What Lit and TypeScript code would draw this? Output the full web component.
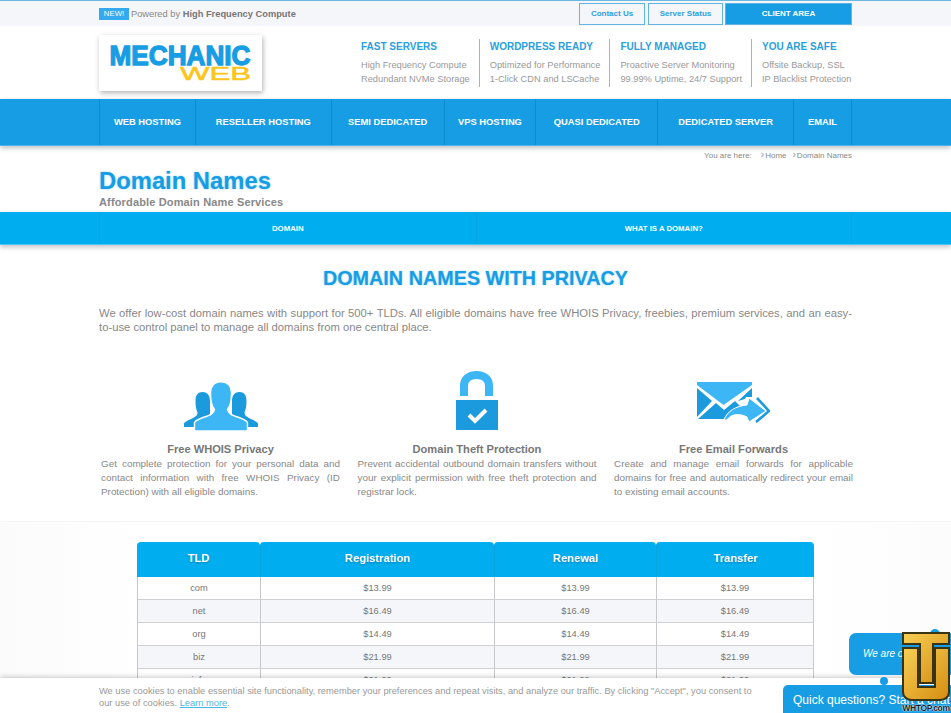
import { LitElement, html, css, svg } from "lit";
import { customElement } from "lit/decorators.js";

const NAV = [
  ["WEB HOSTING", 96], ["RESELLER HOSTING", 136], ["SEMI DEDICATED", 113], ["VPS HOSTING", 92],
  ["QUASI DEDICATED", 122], ["DEDICATED SERVER", 136], ["EMAIL", 58],
] as const;
const FEATURES = [
  ["FAST SERVERS", "High Frequency Compute", "Redundant NVMe Storage"],
  ["WORDPRESS READY", "Optimized for Performance", "1-Click CDN and LSCache"],
  ["FULLY MANAGED", "Proactive Server Monitoring", "99.99% Uptime, 24/7 Support"],
  ["YOU ARE SAFE", "Offsite Backup, SSL", "IP Blacklist Protection"],
];
const ROWS = [["com", "$13.99", "$13.99", "$13.99"], ["net", "$16.49", "$16.49", "$16.49"], ["org", "$14.49", "$14.49", "$14.49"], ["biz", "$21.99", "$21.99", "$21.99"], ["info", "$21.99", "$21.99", "$21.99"]];

const people = svg`<svg class="i1" width="74" height="50" viewBox="0 0 74 50">
  <g fill="#1b9bdd">
    <path d="M0 46 V42.5 C1 40.5 5 39 9 37 C12 35.5 13.5 34 13.5 31.5 C12.5 29 11.5 26 11.5 20 C11.5 14 14 11 18.5 11 C23 11 26 14 26 20 V38 L12 46 Z"/>
    <path d="M74 46 V42.5 C73 40.5 69 39 65 37 C62 35.5 60.500 34 60.500 31.500 C61.500 29 62.500 26 62.500 20 C62.500 14 60 11 55.500 11 C51 11 48 14 48 20 V38 L62 46 Z"/>
  </g>
  <path fill="#3db6f6" stroke="#fff" stroke-width="1.4" d="M10.500 50 V41.500 C11.500 39.500 15 38 19 36.500 C25 34.500 30 33 30.500 28.500 C27.500 25 26.500 18 26.500 12 C26.500 5 30.500 .7 37 .7 C43.500 .7 47.500 5 47.500 12 C47.500 18 46.500 25 43.500 28.500 C44 33 49 34.500 55 36.500 C59 38 62.500 39.500 63.500 41.500 V50 Z"/>
</svg>`;
const lock = svg`<svg class="i2" width="44" height="60" viewBox="0 0 44 60">
  <path fill="none" stroke="#3db6f6" stroke-width="8" d="M9 25 V15 C9 8 14 4 21.500 4 C29 4 34 8 34 15 V25"/>
  <rect x="1" y="29" width="42" height="30" fill="#1b9bdd"/>
  <path fill="none" stroke="#fff" stroke-width="4" d="M14 44 L20 50 L31 39"/>
</svg>`;
const mail = svg`<svg class="i3" width="74" height="44" viewBox="0 0 74 44">
  <path fill="#3db6f6" d="M1 1 H56 V4 L27.500 24 L1 4 Z"/>
  <path fill="#1b9bdd" d="M1 7 L16 20 L1 36 Z"/>
  <path fill="#1b9bdd" d="M56 7 V16 L50 16 L49 18 L42 20 Z"/>
  <path fill="#1b9bdd" d="M2 38 L20 22 L28 29 L39 20 L44 25 C38 27 32 31 28 38 Z"/>
  <path fill="#3db6f6" stroke="#fff" stroke-width="1" d="M28 39 C31 30 40 25 51 24 L53 17 L70 30 L53 41 L51 36 C43 32 35 33 31 39 Z"/>
  <path fill="none" stroke="#1b9bdd" stroke-width="2.600" d="M61 17 L73 30 L60 41"/>
</svg>`;
const whtop = svg`<svg width="50" height="71" viewBox="0 0 50 71">
  <defs><linearGradient id="g" x1="0" y1="0" x2="1" y2="1"><stop offset="0" stop-color="#f8cf55"/><stop offset="1" stop-color="#d48d10"/></linearGradient></defs>
  <path fill="url(#g)" stroke="#3a3414" stroke-width="2" d="M2 17 H17 V56 H34 V17 H48 V61 C48 66 44 69 39 69 H11 C6 69 2 66 2 61 Z"/>
  <path fill="url(#g)" stroke="#3a3414" stroke-width="2" d="M2 2 H48 V13 H32 V52 H19 V13 H2 Z"/>
</svg>`;

@customElement("app-root")
export class AppRoot extends LitElement {
  static styles = css`
    :host { display: block; height: 713px; overflow: hidden; position: relative; background: #fff;
      font-family: "Liberation Sans", Arial, sans-serif; color: #777; }
    * { box-sizing: border-box; }
    .wrap { width: 753px; margin: 0 auto; }
    .top { height: 26px; background: #f5f6fa; border-top: 1px solid #6bb8e0; }
    .top .wrap { display: flex; align-items: center; height: 25px; }
    .new { background: #35a9ee; color: #fff; font-size: 7.800px; width: 30px; height: 12px; line-height: 12px; text-align: center; margin-right: 2px; }
    .powered { font-size: 9.300px; color: #888; flex: 1; }
    .powered b { color: #777; }
    .tbtn { height: 22px; border: 1px solid #62b4e2; color: #2d9fe0; font-size: 8px; font-weight: 700; display: flex; align-items: center; justify-content: center; margin-left: 3px; }
    .tbtn.c { width: 66px; margin: 0; }
    .tbtn.s { width: 75px; }
    .tbtn.a { width: 127px; margin-left: 2px; background: #179de4; color: #fff; }
    .head .wrap { display: flex; height: 73px; }
    .logo { flex: none; width: 163px; height: 56px; margin-top: 9px; box-shadow: 1px 2px 5px rgba(0,0,0,.3); background: #fff; display: block; }
    .feats { flex: none; margin-left: 99px; display: flex; padding-top: 13px; }
    .feat { padding-right: 9px; height: 48px; border-right: 1px solid #7cc0e6; margin-right: 10px; white-space: nowrap; }
    .feat:last-child { border: 0; margin: 0; padding: 0; }
    .feat h4 { margin: 0 0 4px; font-size: 10px; line-height: 15px; color: #2a9fe0; font-weight: 700; }
    .feat div { font-size: 9.280px; line-height: 14px; color: #999; }
    .nav { background: #179de4; height: 47px; box-shadow: 0 2px 5px rgba(0,0,0,.25); position: relative; border-bottom: 1px solid #4fb4ec; }
    .nav .wrap { display: flex; height: 46px; border-left: 1px solid #0f8bce; }
    .nav a { color: #fff; font-size: 9.360px; font-weight: 700; display: flex; align-items: center; justify-content: center; border-right: 1px solid #0f8bce; }
    .crumb { height: 18px; font-size: 8px; color: #888; display: flex; justify-content: flex-end; align-items: center; gap: 6px; }
    .crumb span::before { content: "›"; color: #999; margin-right: 1px; font-size: 10px; line-height: 8px; }
    .crumb em { font-style: normal; margin-right: 3px; }
    h1 { margin: 1px 0 1px; font-size: 23.800px; line-height: 31px; color: #179de4; text-shadow: 0 0 2px rgba(23,157,228,.5); }
    .sub { font-size: 11px; font-weight: 700; color: #888; line-height: 11px; letter-spacing: .15px; height: 15px; }
    .tabs { background: #00aeef; height: 33px; box-shadow: 0 2px 5px rgba(0,0,0,.25); border-bottom: 1px solid #4fc3f2; position: relative; }
    .tabs .wrap { display: grid; grid-template-columns: 1fr 1fr; height: 32px; border-left: 1px solid #0aa3e0; border-right: 1px solid #0aa3e0; }
    .tabs a { color: #fff; font-size: 7.800px; font-weight: 700; display: flex; align-items: center; justify-content: center; }
    .tabs a + a { border-left: 1px solid #0aa3e0; }
    h2 { margin: 0; padding-top: 21px; height: 56px; text-align: center; font-size: 19.800px; line-height: 24px; color: #179de4; text-shadow: 0 0 2px rgba(23,157,228,.5); }
    .lead { margin: 0; font-size: 11.250px; line-height: 14px; color: #888; text-align: justify; height: 61px; padding-top: 5px; }
    .cols { display: grid; grid-template-columns: repeat(3, 239px); justify-content: space-between; padding: 0 0 0 2px; margin-right: -1px; }
    .col { text-align: center; }
    .ico { height: 80px; display: flex; justify-content: center; align-items: flex-start; }
    .ico svg { display: block; }
    .i1 { margin-top: 19px; }
    .i2 { margin-top: 9px; }
    .i3 { margin-top: 19px; margin-left: -2px; }
    .col h3 { margin: 0; font-size: 11.100px; line-height: 14px; color: #777; height: 15px; }
    .col p { margin: 0; font-size: 9.900px; line-height: 14px; color: #888; text-align: justify; }
    .band { margin-top: 22px; border-top: 1px solid #f5f5f5; height: 300px; padding-top: 20px; background: linear-gradient(90deg, #fbfbfb, #fff 15%, #fff 85%, #fcfcfc); }
    table { width: 677px; margin: 0 auto; border-collapse: separate; border-spacing: 0; table-layout: fixed; }
    th { height: 35px; padding: 0 0 3px; background: #00aeef; color: #fff; font-size: 11.200px; text-shadow: 0 1px 2px rgba(0,0,0,.25); border-left: 1px solid #0aa3e0; border-top-right-radius: 4px; border-top-left-radius: 4px; }
    th:first-child { border-left: 0; }
    td { height: 23px; text-align: center; font-size: 9.300px; color: #777; border-left: 1px solid #c8c8cc; border-bottom: 1px solid #cfcfd4; }
    td:last-child { border-right: 1px solid #c8c8cc; }
    tr:nth-child(even) td { background: #f5f6fa; }
    .cookie { position: absolute; left: 0; right: 0; bottom: 0; height: 35px; background: #fff; box-shadow: 0 -1px 5px rgba(0,0,0,.22); font-size: 9.300px; line-height: 12px; color: #999; padding-top: 7px; }
    .cookie p { margin: 0; width: 660px; }
    .cookie a { color: #4db5e8; text-decoration: underline; }
    .bubble { position: absolute; left: 849px; top: 633px; width: 120px; height: 42px; background: #179de4; border-radius: 7px; color: #fff; font-size: 10px; font-style: italic; padding: 15px 0 0 14px; white-space: nowrap; }
    .dot { position: absolute; left: 880px; top: 677px; width: 8px; height: 8px; border-radius: 50%; background: #179de4; }
    .dot2 { position: absolute; left: 930px; top: 629px; width: 10px; height: 10px; border-radius: 50%; background: #179de4; }
    .chat { position: absolute; left: 783px; top: 685px; width: 180px; height: 30px; background: #179de4; border-radius: 5px 5px 0 0; color: #fff; font-size: 12px; padding: 8px 0 0 10px; white-space: nowrap; }
    .badge { position: absolute; left: 901px; top: 631px; width: 50px; height: 82px; }
    .badge svg { display: block; }
    .badge span { display: block; margin-top: 1px; font-size: 8.500px; line-height: 10px; font-weight: 700; color: #1c1c1c; text-align: center; letter-spacing: -.3px; text-shadow: 0 0 2px #fff, 0 0 1px #fff; white-space: nowrap; }
  `;

  render() {
    return html`
      <div class="top"><div class="wrap">
        <span class="new">NEW!</span>
        <span class="powered">Powered by <b>High Frequency Compute</b></span>
        <span class="tbtn c">Contact Us</span><span class="tbtn s">Server Status</span><span class="tbtn a">CLIENT AREA</span>
      </div></div>
      <div class="head"><div class="wrap">
        <svg class="logo" viewBox="0 0 163 56">
          <text x="10.500" y="29.500" font-family="Liberation Sans" font-weight="700" font-size="27" fill="#179de4" stroke="#179de4" stroke-width="1.300" textLength="141" lengthAdjust="spacingAndGlyphs">MECHANIC</text>
          <text x="81" y="45" font-family="Liberation Sans" font-size="19" fill="#fbc51a" stroke="#fbc51a" stroke-width=".5" textLength="71" lengthAdjust="spacingAndGlyphs">WEB</text>
        </svg>
        <div class="feats">${FEATURES.map(f => html`<div class="feat"><h4>${f[0]}</h4><div>${f[1]}</div><div>${f[2]}</div></div>`)}</div>
      </div></div>
      <div class="nav"><div class="wrap">${NAV.map(([t, w]) => html`<a style="width:${w}px">${t}</a>`)}</div></div>
      <div class="wrap">
        <div class="crumb"><em>You are here:</em><span>Home</span><span>Domain Names</span></div>
        <h1>Domain Names</h1>
        <div class="sub">Affordable Domain Name Services</div>
      </div>
      <div class="tabs"><div class="wrap"><a>DOMAIN</a><a>WHAT IS A DOMAIN?</a></div></div>
      <div class="wrap">
        <h2>DOMAIN NAMES WITH PRIVACY</h2>
        <p class="lead">We offer low-cost domain names with support for 500+ TLDs. All eligible domains have free WHOIS Privacy, freebies, premium services, and an easy-to-use control panel to manage all domains from one central place.</p>
        <div class="cols">
          <div class="col"><div class="ico">${people}</div><h3>Free WHOIS Privacy</h3><p>Get complete protection for your personal data and contact information with free WHOIS Privacy (ID Protection) with all eligible domains.</p></div>
          <div class="col"><div class="ico">${lock}</div><h3>Domain Theft Protection</h3><p>Prevent accidental outbound domain transfers without your explicit permission with free theft protection and registrar lock.</p></div>
          <div class="col"><div class="ico">${mail}</div><h3>Free Email Forwards</h3><p>Create and manage email forwards for applicable domains for free and automatically redirect your email to existing email accounts.</p></div>
        </div>
      </div>
      <div class="band">
        <table>
          <colgroup><col style="width:123px"/><col style="width:234px"/><col style="width:162px"/><col style="width:158px"/></colgroup>
          <thead><tr><th>TLD</th><th>Registration</th><th>Renewal</th><th>Transfer</th></tr></thead>
          <tbody>${ROWS.map(r => html`<tr>${r.map(c => html`<td>${c}</td>`)}</tr>`)}</tbody>
        </table>
      </div>
      <div class="cookie"><div class="wrap"><p>We use cookies to enable essential site functionality, remember your preferences and repeat visits, and analyze our traffic. By clicking "Accept", you consent to our use of cookies. <a>Learn more</a>.</p></div></div>
      <div class="bubble">We are online!</div><div class="dot"></div><div class="dot2"></div>
      <div class="chat">Quick questions? Start a chat</div>
      <div class="badge">${whtop}<span>WHTOP.com</span></div>
    `;
  }
}
